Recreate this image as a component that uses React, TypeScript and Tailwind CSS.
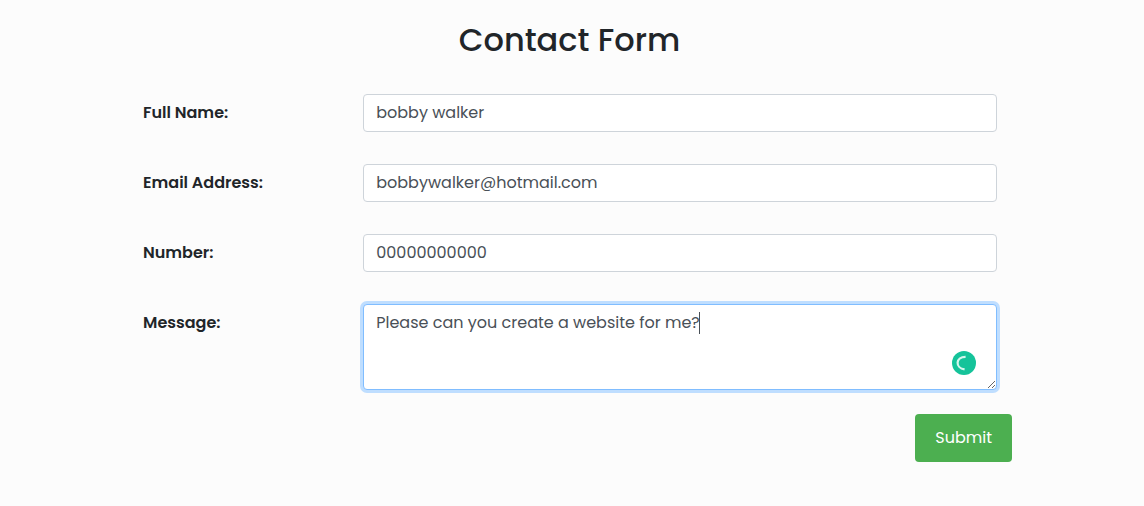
import React, { useState } from "react";

const control =
  "block w-full rounded border border-[#ced4da] bg-white px-3 text-base leading-6 text-[#495057] outline-none focus:border-[#80bdff] focus:ring-3 focus:ring-[#bfdeff]";
const textInput = `${control} h-[38px] pb-0.5`;

function Row({ id, label, children }: { id: string; label: string; children: React.ReactNode }) {
  return (
    <div className="grid grid-cols-4">
      <label htmlFor={id} className="px-4 pt-[7px] text-base leading-6 font-semibold">
        {label}
      </label>
      <div className="col-span-3 px-[15px]">{children}</div>
    </div>
  );
}

export default function App() {
  const [values, setValues] = useState({
    name: "bobby walker",
    email: "bobbywalker@hotmail.com",
    number: "00000000000",
    message: "Please can you create a website for me?",
  });
  const update =
    (key: keyof typeof values) =>
    (e: React.ChangeEvent<HTMLInputElement | HTMLTextAreaElement>) =>
      setValues({ ...values, [key]: e.target.value });

  return (
    <main className="min-h-screen bg-[#fcfcfc] pr-[5px] font-['Poppins','Inter',sans-serif] text-[#212529]">
      <form
        className="mx-auto flex max-w-[885px] flex-col gap-[34px] pt-5 pb-11"
        onSubmit={(e) => e.preventDefault()}
      >
        <h1 className="text-center text-[32px] leading-10 font-medium">Contact Form</h1>
        <div className="flex flex-col gap-8">
          <Row id="name" label="Full Name:">
            <input id="name" type="text" value={values.name} onChange={update("name")} className={textInput} />
          </Row>
          <Row id="email" label="Email Address:">
            <input id="email" type="email" value={values.email} onChange={update("email")} className={textInput} />
          </Row>
          <Row id="number" label="Number:">
            <input id="number" type="tel" value={values.number} onChange={update("number")} className={textInput} />
          </Row>
          <div className="flex flex-col gap-6">
            <Row id="message" label="Message:">
              <div className="relative">
                <textarea
                  id="message"
                  rows={3}
                  autoFocus
                  spellCheck={false}
                  value={values.message}
                  onChange={update("message")}
                  className={`${control} h-[86px] resize-y py-1.5 caret-transparent`}
                />
                <span className="absolute top-2 left-[336px] h-[22px] w-px bg-[#495057]" />
                <svg viewBox="0 0 24 24" className="absolute right-[21px] bottom-[15px] size-6" aria-hidden="true">
                  <circle cx="12" cy="12" r="12" fill="#15c39a" />
                  <path d="M13.6 5.8C3.2 5.8 3 17 12.6 18.4" fill="none" stroke="#d5f6ed" strokeWidth="2.2" />
                </svg>
              </div>
            </Row>
            <button type="submit" className="h-12 self-end rounded bg-[#4caf50] px-5 text-base font-normal text-white">
              Submit
            </button>
          </div>
        </div>
      </form>
    </main>
  );
}
